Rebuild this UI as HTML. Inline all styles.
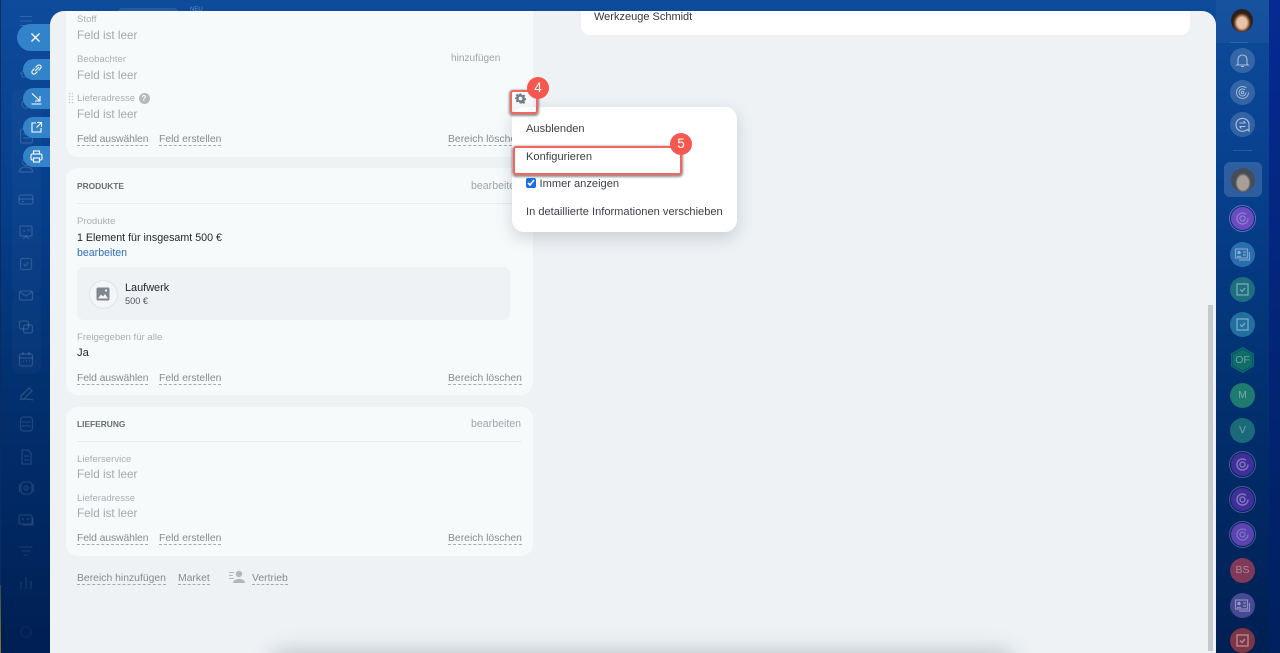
<!DOCTYPE html>
<html lang="de">
<head>
<meta charset="utf-8">
<style>
html,body{margin:0;padding:0;width:1280px;height:653px;overflow:hidden}
body{position:relative;font-family:"Liberation Sans",sans-serif;background:#02306f}
#w{position:absolute;left:0;top:0;width:1280px;height:653px;overflow:hidden;filter:blur(.3px);background:linear-gradient(180deg,#0e4b9b 0%,#063f8c 30%,#02306f 60%,#001f52 100%)}
.a{position:absolute;white-space:nowrap}
.panel{position:absolute;left:50px;top:11px;width:1166px;height:660px;background:#eef2f5;border-radius:14px 14px 0 0;overflow:hidden}
.card{position:absolute;left:66px;width:467px;background:#f7fafb}
.lb{position:absolute;white-space:nowrap;font-size:9.6px;line-height:12px;color:#a9afb5}
.em{position:absolute;white-space:nowrap;font-size:11.7px;line-height:14px;color:#a4a9af}
.lk{position:absolute;white-space:nowrap;font-size:10.4px;line-height:11px;margin-top:1px;color:#858b92;border-bottom:1px dashed #a6abb1}
.hd{position:absolute;white-space:nowrap;font-size:8.4px;line-height:12px;font-weight:bold;color:#686e75}
.ed{position:absolute;white-space:nowrap;font-size:10.6px;line-height:12px;color:#a0a5aa}
.hr{position:absolute;left:77px;width:445px;height:1px;background:#e9edef}
.mi{position:absolute;left:526px;white-space:nowrap;font-size:11.1px;line-height:14px;color:#3c4148}
.badge{position:absolute;width:22px;height:22px;border-radius:50%;background:#f4584f;color:#fff;font-size:13.5px;line-height:22px;text-align:center}
.fab{position:absolute;height:21px;background:#3383cb;border-radius:11px 0 0 11px;left:23px;width:27px}
.fab svg{position:absolute;left:6px;top:3px}
.ri{position:absolute;left:1230px;width:25px;height:25px;border-radius:50%;text-align:center;color:rgba(255,255,255,.38);font-size:10.5px;line-height:25px}
.ri svg{position:absolute;left:4px;top:4px;opacity:.68}
.box{position:absolute;border:2px solid #f4655c;border-radius:3px;box-shadow:0 1px 2px 1px rgba(50,50,50,.55)}
</style>
</head>
<body>
<div id="w">
<div class="a" style="left:1269px;top:0;width:11px;height:653px;background:linear-gradient(180deg,#052a92,#00205e)"></div>
<div class="a" style="left:1216px;top:0;width:53px;height:43px;background:rgba(255,255,255,.04)"></div>
<div class="a" style="left:0;top:0;width:1px;height:653px;background:#0b2c62"></div>
<div class="a" style="left:0;top:585px;width:1px;height:68px;background:linear-gradient(180deg,#3a4a50,#8a7430)"></div>

<!-- left rail -->
<svg class="a" style="left:0;top:0;overflow:visible" width="50" height="653" fill="none" stroke="rgba(255,255,255,.15)" stroke-width="1.3">
<path d="M20 16.500h12M20 21h12M20 25.500h12" stroke-width="1"/>
<path d="M20 74l6-6 6 6M22 73v4h8v-4"/>
<rect x="12" y="89" width="29" height="205" rx="8" fill="rgba(255,255,255,.025)" stroke="none"/>
<rect x="12" y="294" width="29" height="80" rx="8" fill="rgba(255,255,255,.025)" stroke="none"/>
<circle cx="26" cy="104" r="4"/>
<rect x="20.500" y="129" width="12" height="14" rx="2"/><path d="M23 134h7M23 138h7"/>
<circle cx="26" cy="162" r="3.500"/><path d="M19.500 172c0-4 3-5 6.500-5s6.500 1 6.500 5z"/>
<rect x="19" y="195" width="14" height="9" rx="2"/><path d="M19 199h14M22 201.500h2"/>
<rect x="20" y="226" width="12" height="10" rx="1"/><path d="M23 239l3-3 3 3M23 231h2M27 230h3"/>
<rect x="20.500" y="258.500" width="11" height="11" rx="2"/><path d="M23.500 264l2 2 3-4"/>
<rect x="19.500" y="291" width="13" height="9" rx="1.500"/><path d="M20 292l6 4 6-4"/>
<rect x="19.500" y="321" width="9" height="8" rx="2"/><rect x="23.500" y="325" width="9" height="8" rx="2"/>
<rect x="19.500" y="354" width="13" height="12" rx="2"/><path d="M19.500 358h13M23 352v3M29 352v3M23 361h1M26 361h1M29 361h1"/>
<path d="M21 396l8-8 3 3-8 8h-3zM20 399c4 1 8-1 13 1" />
<g stroke="rgba(255,255,255,.12)">
<rect x="20.500" y="417" width="12" height="14" rx="3"/><path d="M22 422h9M22 426h9"/>
<path d="M22 450h6l3 3v11h-9zM24 456h5M24 460h5"/>
<rect x="21" y="482" width="11" height="12" rx="3"/><circle cx="26" cy="488" r="2"/><path d="M19.500 484v8M33.500 484v8"/>
<rect x="19" y="515" width="13" height="9" rx="1.500"/><path d="M22 519h2M26 519h4M33 518v7H23"/>
</g>
<path d="M19.500 547h13M21.500 551h9M23.500 555h5" stroke-width="1.500" stroke="rgba(255,255,255,.08)"/>
<path d="M21 589v-7M26 589v-12M31 589v-8" stroke-width="2" stroke="rgba(255,255,255,.06)"/>
<circle cx="26" cy="632" r="5" stroke="rgba(255,255,255,.04)"/>
</svg>
<div class="a" style="left:118px;top:8px;width:60px;height:8px;border-radius:5px;background:rgba(255,255,255,.1)"></div>
<div class="a" style="left:190px;top:6px;font-size:6px;line-height:8px;color:rgba(255,255,255,.35)">NEU</div>

<!-- panel -->
<div class="panel"></div>

<div class="fab" style="left:17px;top:24px;width:33px;height:27px;border-radius:14px 0 0 14px"><svg style="left:11px;top:6px" width="15" height="15" viewBox="0 0 15 15" fill="none" stroke="#fff" stroke-width="1.300"><path d="M3.500 3.500l8 8M11.500 3.500l-8 8"/></svg></div>
<div class="fab" style="top:59px"><svg width="15" height="15" viewBox="0 0 15 15" fill="none" stroke="#fff" stroke-width="1.100"><path d="M6 9l4-4M5.500 6.500l-2 2a2 2 0 0 0 3 3l2-2M9.500 8.500l2-2a2 2 0 0 0-3-3l-2 2"/></svg></div>
<div class="fab" style="top:88px"><svg width="15" height="15" viewBox="0 0 15 15" fill="none" stroke="#fff" stroke-width="1.100"><path d="M3 2.500l8 7.500M11 5v5H6M2.500 13h10"/></svg></div>
<div class="fab" style="top:117px"><svg width="15" height="15" viewBox="0 0 15 15" fill="none" stroke="#fff" stroke-width="1.100"><path d="M7 3H3v9h9V8M8 2.500h4.500V7M12.500 2.500L7.500 7.500"/></svg></div>
<div class="fab" style="top:146px"><svg width="15" height="15" viewBox="0 0 15 15" fill="none" stroke="#fff" stroke-width="1.100"><rect x="4.500" y="2" width="6" height="3"/><rect x="2" y="5" width="11" height="6" rx="1.500"/><rect x="4.500" y="9" width="6" height="4" fill="#3383cb"/></svg></div>

<!-- card 1 -->
<div class="card" style="top:11px;height:146px;border-radius:0 0 12px 12px"></div>
<div class="lb" style="left:77px;top:14px">Stoff</div>
<div class="em" style="left:77px;top:29px">Feld ist leer</div>
<div class="lb" style="left:77px;top:54px">Beobachter</div>
<div class="ed" style="left:451px;top:53px;font-size:10.1px">hinzufügen</div>
<div class="em" style="left:77px;top:69px">Feld ist leer</div>
<svg class="a" style="left:68px;top:92px" width="7" height="12" fill="#c3c8cc"><circle cx="1.500" cy="1.500" r=".8"/><circle cx="4.500" cy="1.500" r=".8"/><circle cx="1.500" cy="4.500" r=".8"/><circle cx="4.500" cy="4.500" r=".8"/><circle cx="1.500" cy="7.500" r=".8"/><circle cx="4.500" cy="7.500" r=".8"/><circle cx="1.500" cy="10.500" r=".8"/><circle cx="4.500" cy="10.500" r=".8"/></svg>
<div class="lb" style="left:77px;top:93px">Lieferadresse</div>
<div class="a" style="left:138.500px;top:93px;width:11px;height:11px;border-radius:50%;background:#b4bac0;color:#fff;font-size:8px;line-height:11px;text-align:center;font-weight:bold">?</div>
<div class="em" style="left:77px;top:108px">Feld ist leer</div>
<div class="lk" style="left:77px;top:133px;letter-spacing:-.1px">Feld auswählen</div>
<div class="lk" style="left:159px;top:133px">Feld erstellen</div>
<div class="lk" style="left:448px;top:133px">Bereich löschen</div>

<!-- card 2 -->
<div class="card" style="top:168px;height:227px;border-radius:12px"></div>
<div class="hd" style="left:77px;top:180px">PRODUKTE</div>
<div class="ed" style="left:471px;top:180px">bearbeiten</div>
<div class="hr" style="top:203px"></div>
<div class="lb" style="left:77px;top:216px">Produkte</div>
<div class="a" style="left:77px;top:231px;font-size:10.7px;line-height:14px;color:#24282d">1 Element für insgesamt 500 €</div>
<div class="a" style="left:77px;top:247px;font-size:10.6px;line-height:13px;color:#2f6fb7">bearbeiten</div>
<div class="a" style="left:77px;top:267px;width:433px;height:53px;border-radius:7px;background:#eff2f5"></div>
<div class="a" style="left:89px;top:280px;width:27px;height:27px;border-radius:50%;border:1px solid #dfe3e6;background:#f3f5f7"></div>
<svg class="a" style="left:96px;top:287px" width="14" height="14" viewBox="0 0 14 14"><rect x=".5" y=".5" width="13" height="13" rx="1.500" fill="#7f868e"/><path d="M2 11.500l3-4 2 2 2-2.500 3 4.500z" fill="#f3f5f7"/><circle cx="10" cy="3.500" r="1.100" fill="#f3f5f7"/></svg>
<div class="a" style="left:125px;top:281px;font-size:10.9px;line-height:14px;color:#24282d">Laufwerk</div>
<div class="a" style="left:125px;top:296px;font-size:9.2px;line-height:11px;color:#50565c">500 €</div>
<div class="lb" style="left:77px;top:332px">Freigegeben für alle</div>
<div class="a" style="left:77px;top:346px;font-size:11.2px;line-height:14px;color:#24282d">Ja</div>
<div class="lk" style="left:77px;top:372px;letter-spacing:-.1px">Feld auswählen</div>
<div class="lk" style="left:159px;top:372px">Feld erstellen</div>
<div class="lk" style="left:448px;top:372px">Bereich löschen</div>

<!-- card 3 -->
<div class="card" style="top:407px;height:149px;border-radius:12px"></div>
<div class="hd" style="left:77px;top:418px">LIEFERUNG</div>
<div class="ed" style="left:471px;top:418px">bearbeiten</div>
<div class="hr" style="top:441px"></div>
<div class="lb" style="left:77px;top:454px">Lieferservice</div>
<div class="em" style="left:77px;top:468px">Feld ist leer</div>
<div class="lb" style="left:77px;top:493px">Lieferadresse</div>
<div class="em" style="left:77px;top:507px">Feld ist leer</div>
<div class="lk" style="left:77px;top:532px;letter-spacing:-.1px">Feld auswählen</div>
<div class="lk" style="left:159px;top:532px">Feld erstellen</div>
<div class="lk" style="left:448px;top:532px">Bereich löschen</div>

<!-- bottom links -->
<div class="lk" style="left:77px;top:572px">Bereich hinzufügen</div>
<div class="lk" style="left:178px;top:572px">Market</div>
<svg class="a" style="left:228px;top:570px" width="18" height="14" viewBox="0 0 18 14" fill="#b3b8bd"><rect x="1" y="2" width="5" height="1"/><rect x="1" y="5" width="4" height="1"/><rect x="1" y="8" width="5" height="1"/><circle cx="11" cy="4" r="3.200"/><path d="M5 13c0-3 3-4 6-4s6 1 6 4z"/></svg>
<div class="lk" style="left:252px;top:572px">Vertrieb</div>

<!-- right card -->
<div class="a" style="left:581px;top:11px;width:609px;height:24px;background:#fff;border-radius:0 0 9px 9px"></div>
<div class="a" style="left:594px;top:10px;font-size:11px;line-height:14px;color:#33383e">Werkzeuge Schmidt</div>

<!-- bottom shadow -->
<div class="a" style="left:285px;top:664px;width:715px;height:6px;background:#b9bfc3;box-shadow:0 0 22px 12px rgba(170,177,182,.8);border-radius:6px"></div>

<!-- scrollbar -->
<div class="a" style="left:1208px;top:305px;width:5px;height:346px;background:#c6caca"></div>

<!-- menu -->
<div class="a" style="left:512px;top:107px;width:225px;height:125px;background:#fff;border-radius:12px;box-shadow:0 6px 16px rgba(70,80,90,.22)"></div>
<div class="mi" style="top:122px">Ausblenden</div>
<div class="mi" style="top:150px">Konfigurieren</div>
<input type="checkbox" checked class="a" style="left:526px;top:178px;width:10px;height:10px;margin:0;accent-color:#1a6fe0">
<div class="mi" style="left:539.500px;top:177px">Immer anzeigen</div>
<div class="mi" style="top:205px">In detaillierte Informationen verschieben</div>

<!-- annotation boxes -->
<div class="box" style="left:510px;top:90px;width:24px;height:20px"></div>
<svg class="a" style="left:515px;top:92.500px" width="11" height="11" viewBox="0 0 24 24" fill="#757b82"><path fill-rule="evenodd" d="M10 1h4l.7 3.200 2 .8 2.800-1.800 2.800 2.800-1.800 2.800.8 2 3.200.7v4l-3.200.7-.8 2 1.800 2.800-2.800 2.800-2.800-1.800-2 .8L14 23h-4l-.7-3.200-2-.8-2.800 1.800-2.800-2.800 1.800-2.800-.8-2L-.5 14v-4l3.200-.7.8-2-1.800-2.800 2.800-2.800 2.800 1.800 2-.8zM12 8a4 4 0 1 0 0 8 4 4 0 0 0 0-8z"/></svg>
<div class="badge" style="left:527px;top:77px">4</div>
<div class="box" style="left:513px;top:146px;width:165px;height:25px"></div>
<div class="badge" style="left:670px;top:133px">5</div>

<!-- right rail -->
<div class="a" style="left:1231px;top:9px;width:22px;height:23px;border-radius:50%;background:radial-gradient(ellipse 9px 10px at 50% 60%,#e9c3a8 0 55%,#6b432c 85%,#2e2019 100%)"></div>
<div class="a" style="left:1230px;top:42px;width:18px;height:1px;background:rgba(255,255,255,.13)"></div>
<div class="ri" style="top:48px;background:rgba(255,255,255,.17)"><svg width="17" height="17" viewBox="0 0 17 17" fill="none" stroke="rgba(255,255,255,.85)" stroke-width="1.100"><path d="M4 12V7.500a4.500 4.500 0 0 1 9 0V12l1.200 1H2.800zM7 14.500h3"/></svg></div>
<div class="ri" style="top:80px;background:rgba(255,255,255,.17)"><svg width="17" height="17" viewBox="0 0 17 17" fill="none" stroke="rgba(255,255,255,.8)" stroke-width="1"><path d="M14.500 8.500a6 6 0 1 1-2-4.500"/><path d="M12 8.500a3.500 3.500 0 1 1-1-2.500"/><circle cx="8.500" cy="8.500" r="1.300"/></svg></div>
<div class="ri" style="top:112px;background:rgba(255,255,255,.17)"><svg width="17" height="17" viewBox="0 0 17 17" fill="none" stroke="rgba(255,255,255,.9)" stroke-width="1.100"><path d="M15 15l-2-1.500A6.500 6.500 0 1 1 15 8.500z"/><path d="M5.500 7h6M9.500 5l2 2M11.500 10.500h-6M7.500 12.500l-2-2"/></svg></div>
<div class="a" style="left:1233px;top:150px;width:19px;height:1px;background:rgba(255,255,255,.13)"></div>
<div class="a" style="left:1224px;top:162px;width:38px;height:35px;border-radius:6px;background:rgba(255,255,255,.16)"></div>
<div class="a" style="left:1231px;top:168px;width:24px;height:24px;border-radius:50%;background:radial-gradient(ellipse 8px 10px at 50% 62%,#a89f9b 0 70%,#5c5c62 90%,#464c58 100%)"></div>

<div class="ri" style="top:207px;background:#6a4bc0;box-shadow:0 0 0 1px #062f75,0 0 0 2px rgba(160,140,230,.6);width:23px;height:23px;left:1231px"><svg style="left:3px;top:3px" width="17" height="17" viewBox="0 0 17 17" fill="none" stroke="rgba(255,255,255,.4)" stroke-width="1.300"><path d="M14 8.500a5.500 5.500 0 1 1-2-4.200"/><circle cx="8.500" cy="8.500" r="2.500"/></svg></div>
<div class="ri" style="top:242px;background:#2a6eae"><svg width="17" height="17" viewBox="0 0 17 17" fill="none" stroke="rgba(255,255,255,.55)" stroke-width="1.200"><rect x="1.500" y="3" width="12" height="9"/><path d="M15.500 6v8H5"/><circle cx="5" cy="6.500" r="1.200" fill="rgba(255,255,255,.55)"/><path d="M3 10.500h4M9 6h3M9 9h3"/></svg></div>
<div class="ri" style="top:277px;background:#1d6f80"><svg width="17" height="17" viewBox="0 0 17 17" fill="none" stroke="rgba(255,255,255,.55)" stroke-width="1.400"><rect x="3" y="3" width="11" height="11"/><path d="M6 8.500l2 2 3-3.500"/></svg></div>
<div class="ri" style="top:312px;background:#22709f"><svg width="17" height="17" viewBox="0 0 17 17" fill="none" stroke="rgba(255,255,255,.55)" stroke-width="1.400"><rect x="3" y="3" width="11" height="11"/><path d="M6 8.500l2 2 3-3.500"/></svg></div>
<svg class="a" style="left:1230px;top:346px" width="25" height="28" viewBox="0 0 25 28"><path d="M12.500 1L24 7.500v13L12.500 27 1 20.500v-13z" fill="#0f6c68"/><path d="M12.500 3L22.500 8.500v11L12.500 25 2.500 19.500v-11z" fill="none" stroke="#0a4f70" stroke-width=".8"/></svg>
<div class="a" style="left:1230px;top:353px;width:25px;text-align:center;font-size:10.5px;line-height:14px;color:rgba(255,255,255,.38)">OF</div>
<div class="ri" style="top:383px;background:#1f7a70">M</div>
<div class="ri" style="top:418px;background:#1a6a7a">V</div>
<div class="ri" style="top:453px;background:#3f2f98;box-shadow:0 0 0 1px #03245e,0 0 0 2px rgba(150,130,220,.5);width:23px;height:23px;left:1231px"><svg style="left:3px;top:3px" width="17" height="17" viewBox="0 0 17 17" fill="none" stroke="rgba(255,255,255,.5)" stroke-width="1.500"><path d="M14 8.500a5.500 5.500 0 1 1-2-4.200"/><circle cx="8.500" cy="8.500" r="2.500"/></svg></div>
<div class="ri" style="top:488px;background:#3f2f98;box-shadow:0 0 0 1px #03245e,0 0 0 2px rgba(150,130,220,.5);width:23px;height:23px;left:1231px"><svg style="left:3px;top:3px" width="17" height="17" viewBox="0 0 17 17" fill="none" stroke="rgba(255,255,255,.5)" stroke-width="1.500"><path d="M14 8.500a5.500 5.500 0 1 1-2-4.200"/><circle cx="8.500" cy="8.500" r="2.500"/></svg></div>
<div class="ri" style="top:523px;background:#5a44b0;box-shadow:0 0 0 1px #03245e,0 0 0 2px rgba(150,130,220,.5);width:23px;height:23px;left:1231px"><svg style="left:3px;top:3px" width="17" height="17" viewBox="0 0 17 17" fill="none" stroke="rgba(255,255,255,.35)" stroke-width="1.300"><path d="M14 8.500a5.500 5.500 0 1 1-2-4.200"/><circle cx="8.500" cy="8.500" r="2.500"/></svg></div>
<div class="ri" style="top:558px;background:#7e3a58">BS</div>
<div class="ri" style="top:593px;background:#474a93"><svg width="17" height="17" viewBox="0 0 17 17" fill="none" stroke="rgba(255,255,255,.55)" stroke-width="1.200"><rect x="1.500" y="3" width="12" height="9"/><path d="M15.500 6v8H5"/><circle cx="5" cy="6.500" r="1.200" fill="rgba(255,255,255,.55)"/><path d="M3 10.500h4M9 6h3M9 9h3"/></svg></div>
<div class="ri" style="top:628px;background:#7d3645"><svg width="17" height="17" viewBox="0 0 17 17" fill="none" stroke="rgba(255,255,255,.6)" stroke-width="1.400"><rect x="3" y="3" width="11" height="11"/><path d="M6 8.500l2 2 3-3.500"/></svg></div>
</div>
</body>
</html>
